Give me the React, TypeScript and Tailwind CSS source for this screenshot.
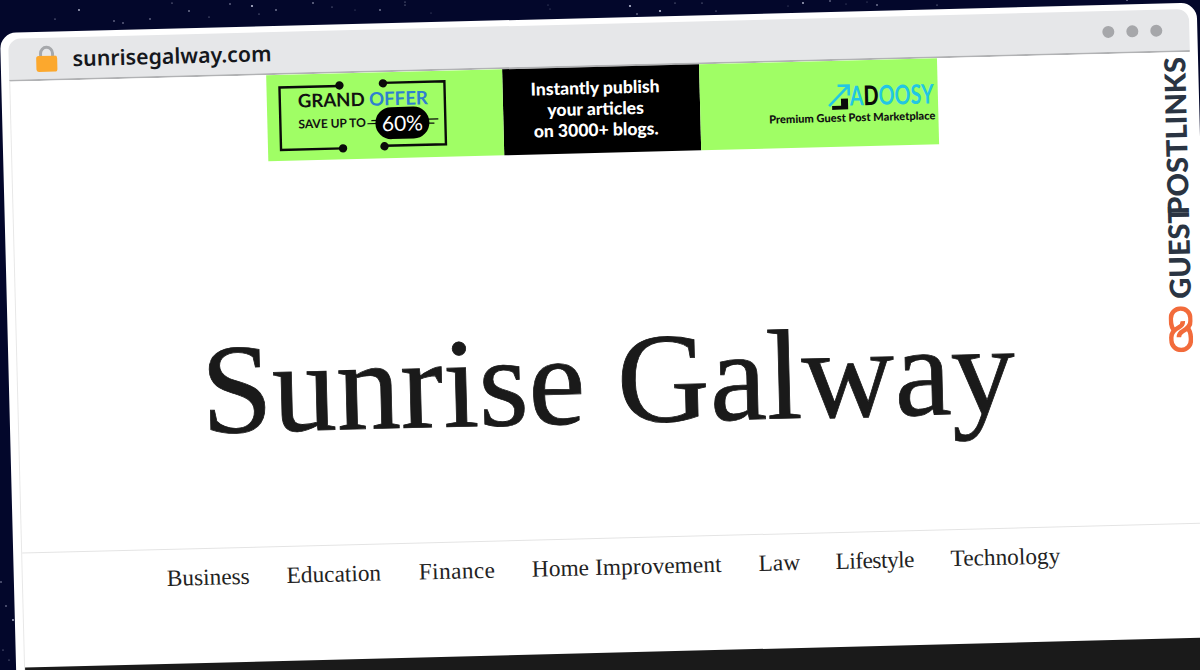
const stars: [number, number, number][] = [
  [79,10,.9],[55,19,.6],[114,21,.7],[123,23,.7],[150,19,.7],[172,3,.6],[189,11,.8],[230,4,.7],[252,6,1.1],[276,10,.8],[259,14,.5],[209,17,.5],
  [313,3,.8],[332,7,.5],[380,10,.8],[405,2,.5],[355,10,.4],[405,5,.5],[431,13,.4],[550,9,.4],[548,5,.4],[630,6,1.1],[660,11,1.1],[637,14,.7],[675,3,.5],[702,3,.5],[716,11,.5],
  [803,3,.9],[788,6,.4],[830,1,.7],[846,4,.4],[877,5,.8],[867,2,.4],[937,5,.5],[1127,0,.8],
  [1,582,.7],[6,606,.7],[13,620,.9],[3,650,.5],[9,660,.5],
];

function Offer() {
  return (
    <div className="relative flex w-[236px] flex-col items-center justify-center bg-[#a0fe65] pr-1 pb-1">
      <svg className="absolute inset-0 h-full w-full" viewBox="0 0 236 86" fill="none" stroke="#0a0a0a" strokeWidth="2.4">
        <path d="M73 12.5H13V75H75" />
        <path d="M116.5 10.5H178V73.5H116.5" />
        <circle cx="73" cy="12" r="4.2" fill="#0a0a0a" stroke="none" />
        <circle cx="116.5" cy="11" r="4.2" fill="#0a0a0a" stroke="none" />
        <circle cx="75" cy="75" r="4.2" fill="#0a0a0a" stroke="none" />
        <circle cx="116.5" cy="74" r="4.2" fill="#0a0a0a" stroke="none" />
        <path d="M100 51H112M104 48H112M161 48H171M161 52H167" strokeWidth="1.2" />
      </svg>
      <div className="relative flex w-[170px] flex-col">
        <div className="font-['Lato'] text-[18.6px] leading-[20px] font-bold whitespace-nowrap text-[#111]">GRAND <span className="text-[#2f7fcf]">OFFER</span></div>
        <div className="-mt-px flex items-center gap-[10px]">
          <span className="-mt-[2px] font-['Lato'] text-[12px] font-bold whitespace-nowrap text-[#111]">SAVE UP TO</span>
          <span className="rounded-full bg-black px-[6px] py-[3px] font-['Lato'] text-[21px] leading-[26px] text-white">60%</span>
        </div>
      </div>
    </div>
  );
}

function Adoosy() {
  return (
    <div className="flex flex-1 flex-col items-end justify-center bg-[#a0fe65] pr-[3px] pb-[2px]">
      <div className="flex items-end">
        <svg width="24" height="26" viewBox="0 0 24 26" fill="none" className="-mr-[2px]">
          <path d="M1 22 20 3M10 2H21V12" stroke="#22c6e4" strokeWidth="2.6" />
          <path d="M4 26V22H13V15H20V26Z" fill="#0a0a0a" />
        </svg>
        <span className="inline-block w-[85px] font-['Lato'] text-[27px] leading-[28px]">
          <span className="inline-block origin-left scale-x-[.73] font-bold whitespace-nowrap text-[#22c6e4]">A<span className="font-black text-[#0a0a0a]">D</span>OOSY</span>
        </span>
      </div>
      <div className="mt-px font-['Lato'] text-[11.1px] leading-[13px] font-black whitespace-nowrap text-[#111]">Premium Guest Post Marketplace</div>
    </div>
  );
}

const nav: [string, string][] = [
  ['Business', 'w-[82px]'],
  ['Education', 'w-[96px]'],
  ['Finance', 'w-[76px] tracking-[0.4px]'],
  ['Home Improvement', 'w-[190px] tracking-[0.1px]'],
  ['Law', 'w-[40px]'],
  ['Lifestyle', 'w-[78px] tracking-[-0.5px]'],
  ['Technology', 'w-[108px]'],
];

export default function App() {
  return (
    <div className="relative h-[670px] w-[1200px] overflow-hidden bg-[#03072b]">
      <svg className="absolute inset-0" width="1200" height="670">
        {stars.map(([x, y, r], i) => <circle key={i} cx={x} cy={y} r={r} fill="#e8ecff" opacity=".8" />)}
      </svg>
      <div className="relative mt-[33px] flex h-[700px] w-[1197px] origin-top-left rotate-[-1.45deg] flex-col rounded-[16px] bg-white px-2 pt-[6px]">
        <div className="flex h-[43px] items-center rounded-t-[12px] border-b-2 border-[#b1b2b4] bg-[#e6e7e9] pr-[27px] pl-[26px]">
          <svg width="24" height="28" viewBox="0 0 24 28" className="shrink-0">
            <path d="M6 13V8.5a6 6 0 0 1 12 0V13" fill="none" stroke="#a6a8ab" strokeWidth="3" />
            <rect x="1.5" y="11" width="21" height="16" rx="2.5" fill="#fca82d" />
          </svg>
          <span className="ml-[14px] font-['Noto_Sans'] text-[21.3px] font-semibold text-[#15171c]">sunrisegalway.com</span>
          <div className="ml-auto flex gap-3">
            <span className="h-3 w-3 rounded-full bg-[#a6a7aa]" />
            <span className="h-3 w-3 rounded-full bg-[#a6a7aa]" />
            <span className="h-3 w-3 rounded-full bg-[#a6a7aa]" />
          </div>
        </div>
        <div className="flex h-[644px] flex-col border-l border-[#e8e8e8] bg-white">
          <div className="ml-[256px] flex h-[86px] w-[671px] shrink-0">
            <Offer />
            <div className="flex w-[197px] items-center justify-center bg-black pr-[12px] pb-1 text-center font-['Lato'] text-[17.5px] leading-[21px] font-black text-white">
              <div>Instantly publish<br />your articles<br />on 3000+ blogs.</div>
            </div>
            <Adoosy />
          </div>
          <div className="flex h-[385px] items-center justify-center pt-[69px]">
            <h1 className="font-['Liberation_Serif'] text-[128px] leading-none whitespace-nowrap text-[#1a1a1a] [-webkit-text-stroke:0.8px_#1a1a1a]">Sunrise Galway</h1>
          </div>
          <nav className="flex h-[115px] justify-center gap-[37px] border-t border-[#e4e4e4] pt-[13px] font-['Liberation_Serif'] text-[23.3px] leading-[30px] text-[#222]">
            {nav.map(([label, cls]) => <span key={label} className={`${cls} text-center whitespace-nowrap`}>{label}</span>)}
          </nav>
          <div className="flex-1 bg-[#1a1a1a]" />
        </div>
        <div className="absolute top-[54px] right-[10px] flex flex-col items-center">
          <div className="rotate-180 font-['Lato'] text-[29px] leading-[28px] font-black whitespace-nowrap text-[#2a3442] [writing-mode:vertical-rl]">
            <span>GUEST</span><span className="-mt-[9px] inline-block">POSTLINKS</span>
          </div>
          <svg width="24" height="46" viewBox="0 0 24 46" fill="none" stroke="#f26b3b" strokeWidth="4.5" className="mt-[8px]">
            <path d="M6 25C3 22 2.2 18 2.2 14V12a9.8 9.8 0 0 1 19.6 0v3c0 5-4 8-8 10-3 1.5-4 3-4 6" />
            <path d="M18 21c3 3 3.8 7 3.8 11v2a9.8 9.8 0 0 1-19.6 0v-3c0-5 4-8 8-10 3-1.5 4-3 4-6" />
          </svg>
        </div>
      </div>
    </div>
  );
}
